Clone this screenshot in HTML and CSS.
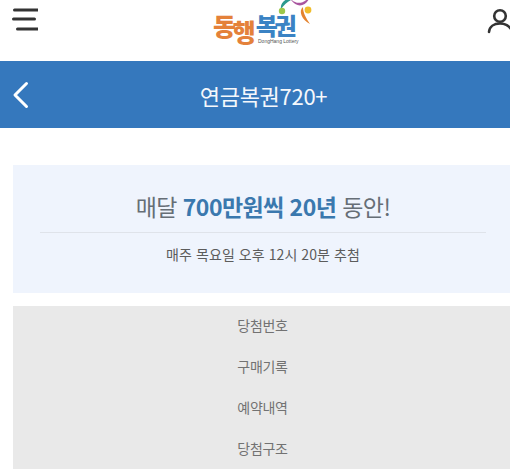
FILE: index.html
```html
<!DOCTYPE html>
<html lang="ko">
<head>
<meta charset="utf-8">
<title>연금복권720+</title>
<link rel="stylesheet" href="styles.css">
</head>
<body>
<header class="top">
  <svg class="menu-icon" width="26" height="24" viewBox="0 0 26 24" aria-hidden="true">
    <path d="M2.500 2H25.500M1.500 11H22.500M5.500 21H25.500" fill="none" stroke="#333" stroke-width="3" stroke-linecap="round"/>
  </svg>
  <div class="logo">
    <svg class="logo-art" width="40" height="30" viewBox="0 0 40 30" aria-hidden="true">
      <path d="M7 9C6 5 9 1 13 -1L17 0C13 2 10 5 7 9Z" fill="#2c9a8e"/>
      <circle cx="8" cy="11" r="3.200" fill="#9cc84b"/>
      <path d="M15 -4C18 3 28 7 36 -4C33 8 20 9 15 -4Z" fill="#a9559f"/>
      <circle cx="34" cy="10" r="3.400" fill="#f0bd2c"/>
      <path d="M29 7C24 11 28 20 36 24C32 18 29 13 29 7Z" fill="#e4832f"/>
    </svg>
    <div class="logo-text"><span class="logo-dong">동<span class="logo-haeng">행</span></span><span class="logo-bok">복권</span></div>
    <div class="logo-sub">DongHang Lottery</div>
  </div>
  <svg class="user-icon" width="23" height="27" viewBox="0 0 23 27" aria-hidden="true">
    <circle cx="13" cy="8" r="5.800" fill="none" stroke="#333" stroke-width="2.600"/>
    <path d="M2 24C2.500 18.500 7 15.500 13 15.500C18 15.500 21.500 17.500 24 21" fill="none" stroke="#333" stroke-width="2.600" stroke-linecap="round"/>
  </svg>
</header>
<nav class="titlebar">
  <svg class="back-icon" width="18" height="28" viewBox="0 0 18 28" aria-hidden="true">
    <path d="M14.500 2.500L3 14L14.500 25.500" fill="none" stroke="#fff" stroke-width="3" stroke-linecap="round" stroke-linejoin="round"/>
  </svg>
  <h1 class="page-title">연금복권720+</h1>
</nav>
<main class="content">
  <section class="hero">
    <p class="hero-head">매달 <strong class="hero-accent">700만원씩 20년</strong> 동안!</p>
    <p class="hero-sub">매주 목요일 오후 12시 20분 추첨</p>
  </section>
  <ul class="links">
    <li class="link">당첨번호</li>
    <li class="link">구매기록</li>
    <li class="link">예약내역</li>
    <li class="link">당첨구조</li>
  </ul>
</main>
</body>
</html>
```
FILE: styles.css
```css
* { box-sizing: border-box; }
html, body { margin: 0; padding: 0; }
body {
  width: 510px;
  height: 471px;
  overflow: hidden;
  background: #fff;
  font-family: "Noto Sans CJK KR", "Noto Sans", sans-serif;
}
.top {
  position: relative;
  height: 61px;
  display: flex;
  align-items: flex-start;
  justify-content: space-between;
  padding: 8px 0 0 12px;
}
.menu-icon { display: block; }
.user-icon { display: block; }
.logo {
  position: absolute;
  left: 214px;
  top: 0;
  width: 100px;
  height: 61px;
}
.logo-art { position: absolute; left: 60px; top: 0; }
.logo-text {
  position: absolute;
  left: -1px;
  top: 12px;
  display: flex;
  font-size: 25px;
  line-height: 26px;
  font-weight: 900;
  letter-spacing: -3.2px;
  white-space: nowrap;
}
.logo-dong { color: #e4813a; }
.logo-haeng { display: inline-block; transform: translateY(6px); }
.logo-bok { color: #3a83c4; margin-left: 3px; font-size: 24px; }
.logo-sub {
  position: absolute;
  left: 44px;
  top: 38px;
  font-family: "Liberation Sans", sans-serif;
  font-size: 5px;
  line-height: 7px;
  color: #555;
  white-space: nowrap;
}
.titlebar {
  position: relative;
  height: 67px;
  background: #3578bd;
  display: flex;
  align-items: center;
  justify-content: center;
  padding-left: 17px;
}
.back-icon { position: absolute; left: 12px; top: 20px; }
.page-title {
  margin: 0;
  color: #f5f8fc;
  font-size: 22px;
  line-height: 30px;
  font-weight: 400;
  letter-spacing: -0.3px;
}
.content { padding: 37px 0 0 13px; }
.hero {
  height: 128px;
  background: #eff4fd;
  padding: 0 24px 0 27px;
  text-align: center;
}
.hero-head {
  margin: 0;
  height: 68px;
  padding-top: 23px;
  border-bottom: 1px solid #dfe3ea;
  font-size: 23px;
  line-height: 36px;
  color: #666e76;
  letter-spacing: -0.55px;
  white-space: nowrap;
}
.hero-accent { color: #3a78ae; font-weight: 700; }
.hero-sub {
  margin: 0;
  padding-top: 11px;
  font-size: 14px;
  line-height: 20px;
  color: #5c5c5c;
  letter-spacing: 0.07px;
}
.links {
  list-style: none;
  margin: 13px 0 0;
  padding: 0;
  height: 163px;
  background: #e9e9e9;
}
.link {
  height: 41px;
  padding-left: 2px;
  text-align: center;
  font-size: 14px;
  line-height: 39px;
  color: #727272;
  letter-spacing: -0.3px;
}
```
